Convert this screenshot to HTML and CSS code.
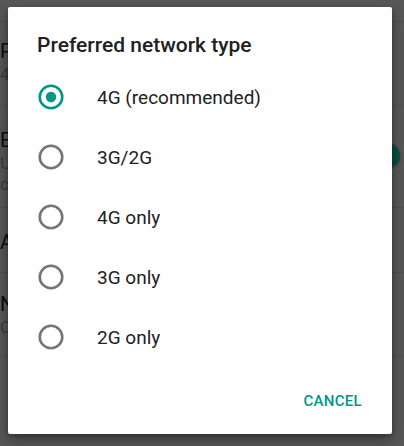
FILE: index.html
```html
<!DOCTYPE html>
<html>
<head>
<meta charset="utf-8">
<link rel="stylesheet" href="styles.css">
</head>
<body>
<div class="screen">
  <div class="settings">
    <div class="row r0"></div>
    <div class="row r1">
      <div class="s-title">Pr</div>
      <div class="s-sub">4G</div>
    </div>
    <div class="row r2">
      <div class="s-title">En</div>
      <div class="s-sub">Us</div>
      <div class="s-sub">co</div>
      <span class="knob"></span>
    </div>
    <div class="row r3">
      <div class="s-title">Ac</div>
    </div>
    <div class="row r4">
      <div class="s-title">Ne</div>
      <div class="s-sub">Ch</div>
    </div>
    <div class="row r5"></div>
  </div>

  <div class="dialog">
    <div class="d-title">Preferred network type</div>
    <div class="options">
      <div class="opt">
        <svg class="radio" width="26" height="26" viewBox="0 0 26 26"><circle cx="13" cy="13" r="11.25" fill="none" stroke="#009688" stroke-width="2.6"/><circle cx="13" cy="13" r="5.2" fill="#009688"/></svg>
        <span class="label">4G (recommended)</span>
      </div>
      <div class="opt">
        <svg class="radio" width="26" height="26" viewBox="0 0 26 26"><circle cx="13" cy="13" r="11.25" fill="none" stroke="#757575" stroke-width="2.6"/></svg>
        <span class="label">3G/2G</span>
      </div>
      <div class="opt">
        <svg class="radio" width="26" height="26" viewBox="0 0 26 26"><circle cx="13" cy="13" r="11.25" fill="none" stroke="#757575" stroke-width="2.6"/></svg>
        <span class="label">4G only</span>
      </div>
      <div class="opt">
        <svg class="radio" width="26" height="26" viewBox="0 0 26 26"><circle cx="13" cy="13" r="11.25" fill="none" stroke="#757575" stroke-width="2.6"/></svg>
        <span class="label">3G only</span>
      </div>
      <div class="opt">
        <svg class="radio" width="26" height="26" viewBox="0 0 26 26"><circle cx="13" cy="13" r="11.25" fill="none" stroke="#757575" stroke-width="2.6"/></svg>
        <span class="label">2G only</span>
      </div>
    </div>
    <div class="actions">
      <span class="btn">CANCEL</span>
    </div>
  </div>
</div>
</body>
</html>
```
FILE: styles.css
```css
html, body {
  margin: 0;
  padding: 0;
}
body {
  width: 404px;
  height: 446px;
  overflow: hidden;
  background: #585858;
  font-family: Roboto, "Noto Sans", sans-serif;
}
.screen {
  position: relative;
  width: 404px;
  height: 446px;
}
.settings {
  display: flex;
  flex-direction: column;
}
.row {
  position: relative;
  border-bottom: 1px solid #505050;
  box-sizing: border-box;
  padding-left: 0;
  white-space: nowrap;
  overflow: hidden;
}
.r0 { height: 22px; }
.r1 { height: 84px; padding-top: 16px; }
.r2 { height: 102px; padding-top: 21px; }
.r3 { height: 65px; padding-top: 21px; }
.r4 { height: 84px; padding-top: 18px; }
.r5 { height: 89px; border-bottom: none; }
.s-title {
  font-size: 20px;
  line-height: 26px;
  color: #0d0d0d;
}
.s-sub {
  font-size: 17px;
  line-height: 21px;
  color: #3a3a3a;
}
.knob {
  position: absolute;
  left: 375px;
  top: 37px;
  width: 25px;
  height: 25px;
  border-radius: 50%;
  background: #0a4d44;
  box-shadow: 0 1px 3px rgba(0,0,0,0.3);
}
.dialog {
  position: absolute;
  left: 8px;
  top: 7px;
  width: 384px;
  height: 427px;
  background: #fff;
  border-radius: 2px;
  box-shadow: 0 6px 16px rgba(0,0,0,0.35), 0 2px 5px rgba(0,0,0,0.25);
  display: flex;
  flex-direction: column;
}
.d-title {
  padding: 24px 0 8px 29px;
  font-size: 21px;
  line-height: 28px;
  font-weight: 500;
  color: #212121;
}
.options {
  display: flex;
  flex-direction: column;
}
.opt {
  height: 60px;
  display: flex;
  align-items: center;
  padding-left: 30px;
  gap: 33px;
}
.radio {
  display: block;
  flex: none;
}
.label {
  font-size: 19px;
  color: #212121;
}
.actions {
  display: flex;
  justify-content: flex-end;
  padding: 16px 30px 15px 0;
}
.btn {
  height: 36px;
  line-height: 36px;
  font-size: 15px;
  font-weight: 500;
  letter-spacing: 0.3px;
  color: #009688;
}
```
